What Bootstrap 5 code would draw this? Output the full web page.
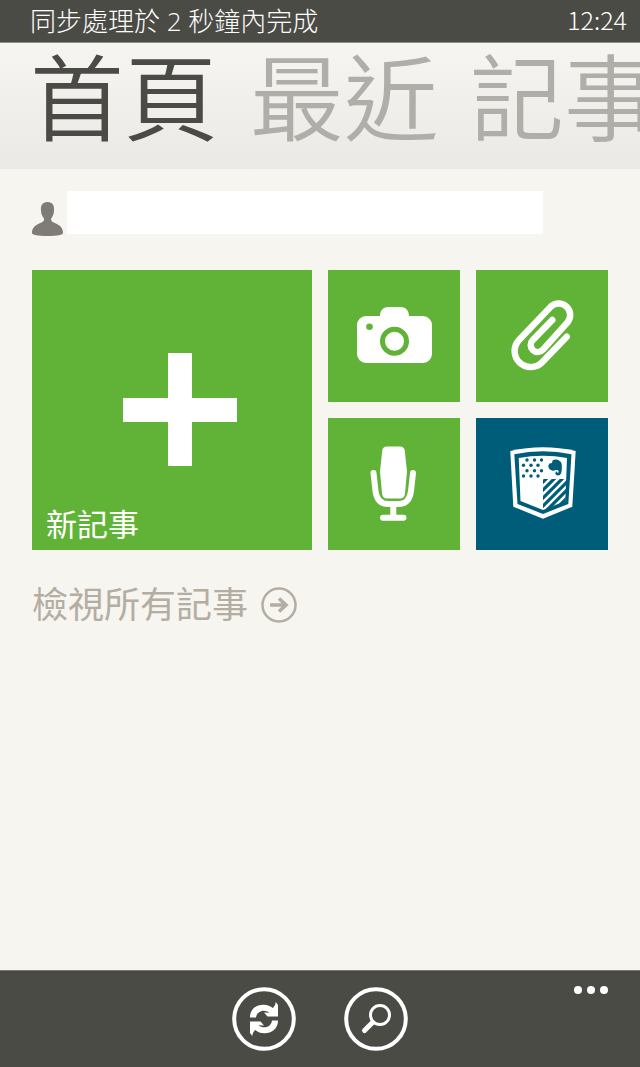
<!DOCTYPE html>
<html lang="zh-Hant">
<head>
<meta charset="utf-8">
<meta name="viewport" content="width=device-width, initial-scale=1">
<title>首頁</title>
<link href="https://cdn.jsdelivr.net/npm/bootstrap@5.3.0/dist/css/bootstrap.min.css" rel="stylesheet">
<style>
  body { background: #f7f5f0; color: #4b4b46; font-family: "Open Sans", "Noto Sans CJK TC", sans-serif; }
  .bar-dark { background: #4b4b46; color: #fff; }
  .status { height: 43px; padding: 0 13px 0 30px; font-size: 26px; font-weight: 300; line-height: 42px; border-bottom: 1px solid #8f8e8a; }
  .status time { font-family: "Noto Sans CJK TC", sans-serif; font-size: 25px; line-height: 38px; }
  .pivot { height: 126px; padding-left: 30px; gap: 32px; background: linear-gradient(#f7f5f1, #ebe9e5); }
  .pivot a { font-family: "Liberation Sans", "Noto Sans CJK TC", sans-serif; font-size: 94px; font-weight: 350; line-height: 118px; color: #b0aea9; text-decoration: none; white-space: nowrap; }
  .pivot a.active { color: #4b4b46; }
  .page-main { padding: 22px 32px; }
  .account { gap: 4px; margin-bottom: 33px; padding-right: 65px; }
  .account input { height: 43px; border: 0; background: #fff; min-width: 0; }
  .tiles { display: grid; grid-template-columns: repeat(4, 1fr); gap: 16px; }
  .tile { position: relative; aspect-ratio: 1; border: 0; padding: 0; background: #60b336; color: #fff; }
  .tile svg { display: block; width: 100%; height: 100%; }
  .tile-big { grid-column: span 2; grid-row: span 2; }
  .tile-big span { position: absolute; left: 14px; bottom: 4px; font-size: 31px; line-height: 44px; }
  .tile-blue { background: #005d7a; }
  .all-notes { margin-top: 32px; gap: 12px; font-size: 36px; line-height: 46px; color: #b3ada2; text-decoration: none; }
  .appbar { display: grid; grid-template-columns: 1fr auto 1fr; height: 97px; padding: 15px 32px; border-top: 1px solid #777772; }
  .appbar button { border: 0; padding: 0; background: none; color: #fff; }
  .appbar .round-set { gap: 48px; }
  .appbar svg { display: block; }
</style>
</head>
<body>
<div class="d-flex flex-column min-vh-100 overflow-hidden">
  <header>
    <div class="status bar-dark d-flex justify-content-between">
      <span>同步處理於 2 秒鐘內完成</span>
      <time>12:24</time>
    </div>
    <nav class="pivot d-flex">
      <a href="#" class="active">首頁</a>
      <a href="#">最近</a>
      <a href="#">記事</a>
    </nav>
  </header>

  <main class="page-main flex-grow-1">
    <div class="account d-flex align-items-start">
      <label for="account" aria-label="帳戶">
        <svg class="d-block" width="31" height="46" viewBox="0 0 31 46"><path fill="#7f7c77" d="M15.500 11c5 0 7 3.500 6.500 8.500 0 4-1.500 6-2.800 8-.4 2 .5 3 2.500 4C28 34 31 37 31 41.500c0 1.500-1 2-3 2.500-7 1.400-18 1.400-25 0-2-.5-3-1-3-2.500C0 37 3 34 9.500 31.500c2-1 2.800-2 2.500-4-1.300-2-3-4-3-8C8.500 14.500 10.500 11 15.500 11z"/></svg>
      </label>
      <input id="account" type="text" class="flex-grow-1" readonly>
    </div>

    <div class="tiles">
      <button type="button" class="tile tile-big">
        <svg viewBox="0 0 280 280"><path fill="#fff" d="M136 83h24v45h45v24h-45v44h-24v-44H91v-24h45z"/></svg>
        <span>新記事</span>
      </button>
      <button type="button" class="tile" aria-label="相機">
        <svg viewBox="0 0 132 132"><path fill="#fff" d="M38 46h14c0-5 3-9 8-9h13c5 0 8 4 8 9h14a9 9 0 0 1 9 9v29a9 9 0 0 1-9 9H38a9 9 0 0 1-9-9V55a9 9 0 0 1 9-9z"/><circle cx="66.500" cy="71.300" r="12" fill="none" stroke="#60b336" stroke-width="5"/><circle cx="41.500" cy="56.700" r="3.300" fill="#60b336"/></svg>
      </button>
      <button type="button" class="tile" aria-label="附件">
        <svg viewBox="0 0 132 132"><path fill="none" stroke="#fff" stroke-width="6.500" stroke-linecap="round" d="M90.700 66.700L66.400 92A16 16 0 0 1 43 70L74.900 36.500A11.500 11.500 0 0 1 91.700 52.100L66.800 79.800A7 7 0 0 1 56.600 70.200L76.300 50"/></svg>
      </button>
      <button type="button" class="tile" aria-label="錄音">
        <svg viewBox="0 0 132 132"><path fill="#fff" d="M59 28.500h13c3 0 4.500 1.500 4.800 4.500L79 53.500 77 75.500c-.3 3.300-2 5-5 5H59c-3 0-4.700-1.700-5-5L52 53.500 54.200 33c.3-3 1.800-4.500 4.800-4.500z"/><path fill="none" stroke="#fff" stroke-width="6" stroke-linecap="round" stroke-linejoin="round" d="M45.500 55L47.500 73C48.500 81 52 86 60 86H70.500C78.500 86 82 81 83 73L85 55M65.300 86V99.500M55 99.700H75.500"/></svg>
      </button>
      <button type="button" class="tile tile-blue" aria-label="Evernote">
        <svg viewBox="0 0 132 132">
          <clipPath id="quarter"><path d="M67 61H91L89.500 83.500 67 93z"/></clipPath>
          <path fill="#fff" d="M34.300 33Q67 25.500 99.700 33L96.300 88.700 67 100.700 37.300 88.700z"/>
          <path fill="#005d7a" d="M38.300 36.300Q67 30 95.500 36.300L92.300 86 67 95.900 41.500 86z"/>
          <path fill="#fff" d="M42.700 40Q67 35.500 91 40L89.300 83 67 92 44.500 83z"/>
          <g fill="#005d7a"><circle cx="51" cy="42" r="1.700"/><circle cx="58.500" cy="42" r="1.700"/><circle cx="65.500" cy="42" r="1.700"/><circle cx="47.500" cy="47.300" r="1.700"/><circle cx="55" cy="47.300" r="1.700"/><circle cx="62" cy="47.300" r="1.700"/><circle cx="51" cy="52.700" r="1.700"/><circle cx="58.500" cy="52.700" r="1.700"/><circle cx="65.500" cy="52.700" r="1.700"/><circle cx="47.500" cy="58" r="1.700"/><circle cx="55" cy="58" r="1.700"/><circle cx="62" cy="58" r="1.700"/>
          <path d="M76.500 42.500C79 41 82 41.500 83.500 43 85.500 43.500 86 46 85.800 50 85.800 54.500 85 57.500 82 57.500 79 57.500 78.500 54 81 53.300L81.500 55C83 55 83 53 82 52.300 79.500 51.500 78.500 53.500 76 52.500 73.500 52 72.300 50 72.300 47.500L73.500 45.500 76 45z"/></g>
          <path clip-path="url(#quarter)" stroke="#005d7a" stroke-width="3.200" d="M64 67L74 57M64 75L82 57M64 83L90 57M64 91L96 59M64 99L96 67M72 99L96 75"/>
        </svg>
      </button>
    </div>

    <a href="#" class="all-notes d-inline-flex align-items-center">檢視所有記事
      <svg width="38" height="38" viewBox="0 0 38 38" fill="none" stroke="#b3ada2"><circle cx="19" cy="19" r="16.500" stroke-width="2.500"/><path stroke-width="3.600" d="M10 19h16M19 12.500l7 6.500-7 6.500"/></svg>
    </a>
  </main>

  <footer class="appbar bar-dark">
    <span></span>
    <div class="round-set d-flex">
      <button type="button" aria-label="同步"><svg width="64" height="64" viewBox="0 0 64 64"><circle cx="32" cy="32" r="29.800" fill="none" stroke="#fff" stroke-width="4"/><path id="arrow" fill="#fff" d="M18 30.500C18 22 24.500 17.700 31.500 17.700c4 0 7 1.300 9.300 3.300 1.800-1.600 2.700-3.500 2.900-6l2.300 3V29.500H35.500l-3.500-4 5.500.3C33.500 22 25 23 24 30.500z"/><use href="#arrow" transform="rotate(180 32 32)"/></svg></button>
      <button type="button" aria-label="搜尋"><svg width="64" height="64" viewBox="0 0 64 64"><circle cx="32" cy="32" r="29.800" fill="none" stroke="#fff" stroke-width="4"/><circle cx="36" cy="28" r="9.500" fill="none" stroke="#fff" stroke-width="3"/><path stroke="#fff" stroke-width="5" stroke-linecap="round" d="M28.500 35.500L20.500 43.500"/></svg></button>
    </div>
    <button type="button" class="ms-auto align-self-start" aria-label="更多"><svg width="34" height="8" viewBox="0 0 34 8" fill="#fff"><circle cx="4" cy="4" r="4"/><circle cx="17" cy="4" r="4"/><circle cx="30" cy="4" r="4"/></svg></button>
  </footer>
</div>
<script src="https://cdn.jsdelivr.net/npm/bootstrap@5.3.0/dist/js/bootstrap.bundle.min.js"></script>
</body>
</html>
